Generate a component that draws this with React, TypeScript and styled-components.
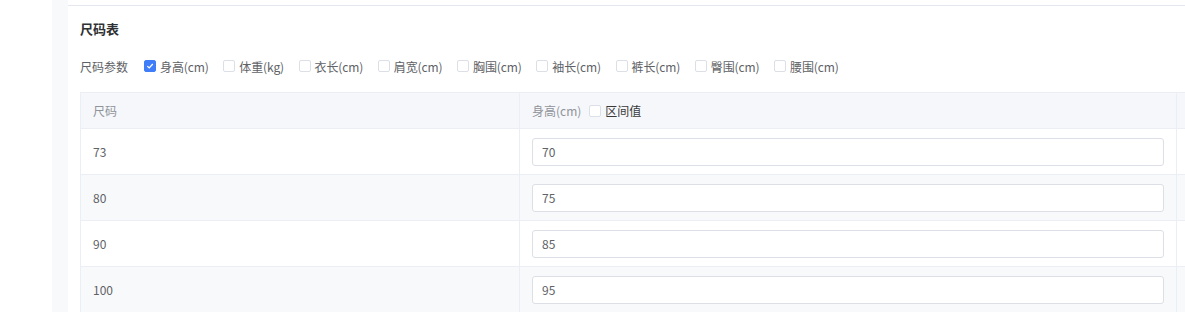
import React from "react";
import styled, { createGlobalStyle } from "styled-components";

const GlobalStyle = createGlobalStyle`
  html, body {
    margin: 0;
    padding: 0;
    background: #ffffff;
    font-family: "Microsoft YaHei", "Noto Sans CJK SC", "Noto Sans", sans-serif;
    -webkit-font-smoothing: antialiased;
  }
`;

const Page = styled.div`
  display: flex;
  width: 1185px;
  height: 312px;
  overflow: hidden;
  background: #ffffff;
`;

const Gutter = styled.div`
  width: 52px;
  flex: none;
  background: #ffffff;
`;

const Strip = styled.div`
  width: 16px;
  flex: none;
  background: #f8f9fb;
`;

const Main = styled.div`
  flex: 1;
  min-width: 0;
  margin-top: 5px;
  border-top: 1px solid #e4e7ed;
  padding: 13px 0 0 12px;
  overflow: hidden;
`;

const Title = styled.div`
  font-size: 13px;
  line-height: 20px;
  font-weight: 700;
  color: #303133;
`;

const ParamRow = styled.div`
  display: flex;
  align-items: center;
  height: 20px;
  margin-top: 17px;
  margin-bottom: 16px;
  white-space: nowrap;
`;

const ParamLabel = styled.span`
  font-size: 12px;
  color: #606266;
  margin-right: 16px;
`;

const CheckItem = styled.label<{ $dark?: boolean; $gap?: number }>`
  display: inline-flex;
  align-items: center;
  gap: 4px;
  margin-right: ${(p) => (p.$gap ?? 14.5)}px;
  font-size: 12px;
  letter-spacing: -0.1px;
  color: ${(p) => (p.$dark ? "#3a3a3a" : "#606266")};
`;

const Box = styled.span<{ $checked?: boolean }>`
  width: 12px;
  height: 12px;
  box-sizing: border-box;
  border-radius: 2px;
  border: 1px solid ${(p) => (p.$checked ? "#3f7ef8" : "#dcdfe6")};
  background: ${(p) => (p.$checked ? "#3f7ef8" : "#ffffff")};
  display: inline-flex;
  align-items: center;
  justify-content: center;
  flex: none;
`;

const Table = styled.table`
  border-collapse: collapse;
  table-layout: fixed;
  width: 1400px;
  border-top: 1px solid #ebeef5;
  border-left: 1px solid #ebeef5;
`;

const HeadCell = styled.th`
  height: 36px;
  padding: 0 12px;
  box-sizing: border-box;
  background: #f5f7fa;
  border-right: 1px solid #ebeef5;
  border-bottom: 1px solid #ebeef5;
  text-align: left;
  font-weight: 400;
  font-size: 12px;
  color: #909399;
  white-space: nowrap;
`;

const HeadInner = styled.div`
  display: flex;
  align-items: center;
  gap: 8px;
`;

const Row = styled.tr<{ $striped: boolean }>`
  background: ${(p) => (p.$striped ? "#f8f9fb" : "#ffffff")};
`;

const Cell = styled.td`
  height: 46px;
  padding: 0 12px;
  box-sizing: border-box;
  border-right: 1px solid #ebeef5;
  border-bottom: 1px solid #ebeef5;
  font-size: 12px;
  color: #606266;
`;

const Input = styled.input`
  display: block;
  width: 100%;
  height: 28px;
  box-sizing: border-box;
  border: 1px solid #dcdfe6;
  border-radius: 3px;
  background: #ffffff;
  padding: 0 9px;
  font-family: inherit;
  font-size: 12px;
  color: #606266;
  outline: none;
`;

const Check = () => (
  <svg width="8" height="8" viewBox="0 0 8 8">
    <path d="M1.3 4.1 L3.2 5.9 L6.8 2" fill="none" stroke="#fff" strokeWidth="1.3" />
  </svg>
);

const params = [
  { name: "身高(cm)", checked: true },
  { name: "体重(kg)" },
  { name: "衣长(cm)" },
  { name: "肩宽(cm)" },
  { name: "胸围(cm)" },
  { name: "袖长(cm)" },
  { name: "裤长(cm)" },
  { name: "臀围(cm)" },
  { name: "腰围(cm)" },
];

const rows = [
  { size: "73", height: "70" },
  { size: "80", height: "75" },
  { size: "90", height: "85" },
  { size: "100", height: "95" },
];

export default function App() {
  return (
    <>
      <GlobalStyle />
      <Page>
        <Gutter />
        <Strip />
        <Main>
          <Title>尺码表</Title>
          <ParamRow>
            <ParamLabel>尺码参数</ParamLabel>
            {params.map((p) => (
              <CheckItem key={p.name}>
                <Box $checked={p.checked}>{p.checked && <Check />}</Box>
                {p.name}
              </CheckItem>
            ))}
          </ParamRow>
          <Table>
            <colgroup>
              <col style={{ width: 439 }} />
              <col style={{ width: 657 }} />
              <col />
            </colgroup>
            <thead>
              <tr>
                <HeadCell>尺码</HeadCell>
                <HeadCell>
                  <HeadInner>
                    身高(cm)
                    <CheckItem $dark $gap={0}>
                      <Box />
                      区间值
                    </CheckItem>
                  </HeadInner>
                </HeadCell>
                <HeadCell />
              </tr>
            </thead>
            <tbody>
              {rows.map((r, i) => (
                <Row key={r.size} $striped={i % 2 === 1}>
                  <Cell>{r.size}</Cell>
                  <Cell>
                    <Input defaultValue={r.height} />
                  </Cell>
                  <Cell />
                </Row>
              ))}
            </tbody>
          </Table>
        </Main>
      </Page>
    </>
  );
}
